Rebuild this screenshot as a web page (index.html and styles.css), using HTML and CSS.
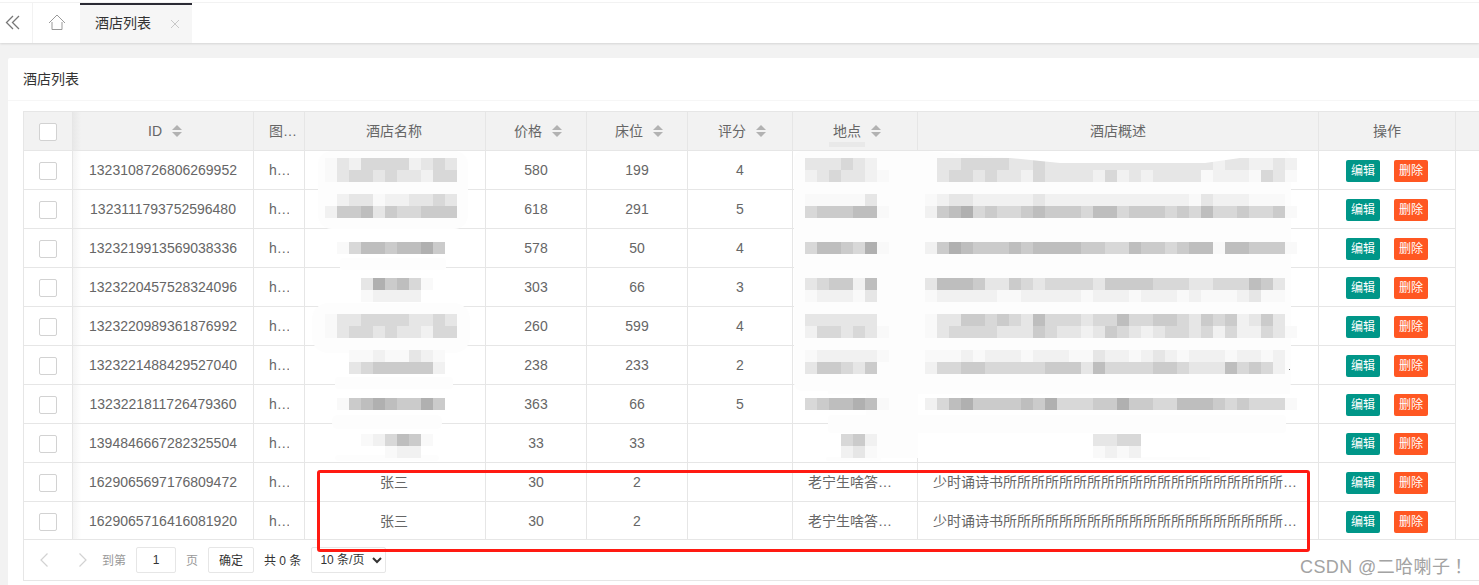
FILE: index.html
```html
<!DOCTYPE html>
<html lang="zh">
<head>
<meta charset="utf-8">
<title>酒店列表</title>
<link rel="stylesheet" href="styles.css">
</head>
<body>
<header class="topbar">
  <div class="tabs">
    <button class="tab-tool collapse" aria-label="收起">
      <svg width="20" height="20" viewBox="0 0 20 20"><path class="ico-dark" d="M8 3 1.5 9.5 8 16M14 3 7.5 9.5 14 16"/></svg>
    </button>
    <button class="tab-tool home" aria-label="首页">
      <svg width="18" height="18" viewBox="0 0 18 18"><path class="ico-light" d="M1 9 9 1l8 8M4 8v7.5h10V8"/></svg>
    </button>
    <div class="tab">
      <span>酒店列表</span>
      <svg class="tab-close" width="10" height="10" viewBox="0 0 10 10"><path d="M1 1l8 8M9 1 1 9"/></svg>
    </div>
  </div>
</header>

<main class="page">
  <section class="card">
    <h2 class="card-title">酒店列表</h2>
    <div class="card-body">
      <div class="grid-wrap">
        <table class="grid">
          <colgroup>
            <col class="c-check"><col class="c-id"><col class="c-img"><col class="c-name"><col class="c-num"><col class="c-num"><col class="c-score"><col class="c-loc"><col class="c-desc"><col class="c-act"><col class="c-gutter">
          </colgroup>
          <thead>
            <tr>
              <th><span class="check"></span></th>
              <th class="shade sortable">ID<i class="sort"></i></th>
              <th class="img-head"><div class="clip">图片</div></th>
              <th class="name-cell">酒店名称</th>
              <th class="sortable">价格<i class="sort"></i></th>
              <th class="sortable">床位<i class="sort"></i></th>
              <th class="sortable">评分<i class="sort"></i></th>
              <th class="sortable">地点<i class="sort"></i></th>
              <th>酒店概述</th>
              <th>操作</th>
              <th class="gutter"></th>
            </tr>
          </thead>
          <tbody>
            <tr><td><span class="check"></span></td><td class="shade">1323108726806269952</td><td><div class="clip">http</div></td><td></td><td>580</td><td>199</td><td>4</td><td></td><td></td><td><a class="btn edit">编辑</a><a class="btn del">删除</a></td><td class="gutter"></td></tr>
            <tr><td><span class="check"></span></td><td class="shade">1323111793752596480</td><td><div class="clip">http</div></td><td></td><td>618</td><td>291</td><td>5</td><td></td><td></td><td><a class="btn edit">编辑</a><a class="btn del">删除</a></td><td class="gutter"></td></tr>
            <tr><td><span class="check"></span></td><td class="shade">1323219913569038336</td><td><div class="clip">http</div></td><td></td><td>578</td><td>50</td><td>4</td><td></td><td></td><td><a class="btn edit">编辑</a><a class="btn del">删除</a></td><td class="gutter"></td></tr>
            <tr><td><span class="check"></span></td><td class="shade">1323220457528324096</td><td><div class="clip">http</div></td><td></td><td>303</td><td>66</td><td>3</td><td></td><td></td><td><a class="btn edit">编辑</a><a class="btn del">删除</a></td><td class="gutter"></td></tr>
            <tr><td><span class="check"></span></td><td class="shade">1323220989361876992</td><td><div class="clip">http</div></td><td></td><td>260</td><td>599</td><td>4</td><td></td><td></td><td><a class="btn edit">编辑</a><a class="btn del">删除</a></td><td class="gutter"></td></tr>
            <tr><td><span class="check"></span></td><td class="shade">1323221488429527040</td><td><div class="clip">http</div></td><td></td><td>238</td><td>233</td><td>2</td><td></td><td></td><td><a class="btn edit">编辑</a><a class="btn del">删除</a></td><td class="gutter"></td></tr>
            <tr><td><span class="check"></span></td><td class="shade">1323221811726479360</td><td><div class="clip">http</div></td><td></td><td>363</td><td>66</td><td>5</td><td></td><td></td><td><a class="btn edit">编辑</a><a class="btn del">删除</a></td><td class="gutter"></td></tr>
            <tr><td><span class="check"></span></td><td class="shade">1394846667282325504</td><td><div class="clip">http</div></td><td></td><td>33</td><td>33</td><td></td><td></td><td></td><td><a class="btn edit">编辑</a><a class="btn del">删除</a></td><td class="gutter"></td></tr>
            <tr><td><span class="check"></span></td><td class="shade">1629065697176809472</td><td><div class="clip">http</div></td><td class="name-cell">张三</td><td>30</td><td>2</td><td></td><td><div class="clip">老宁生啥答案哦</div></td><td><div class="clip">少时诵诗书所所所所所所所所所所所所所所所所所所所所所所所</div></td><td><a class="btn edit">编辑</a><a class="btn del">删除</a></td><td class="gutter"></td></tr>
            <tr class="last"><td><span class="check"></span></td><td class="shade">1629065716416081920</td><td><div class="clip">http</div></td><td class="name-cell">张三</td><td>30</td><td>2</td><td></td><td><div class="clip">老宁生啥答案哦</div></td><td><div class="clip">少时诵诗书所所所所所所所所所所所所所所所所所所所所所所所</div></td><td><a class="btn edit">编辑</a><a class="btn del">删除</a></td><td class="gutter"></td></tr>
          </tbody>
        </table>
        <div class="pager">
          <svg class="pg-arrow" width="8" height="14" viewBox="0 0 8 14"><path d="M7.5.5 1 7l6.5 6.5"/></svg>
          <svg class="pg-arrow next" width="8" height="14" viewBox="0 0 8 14"><path d="M.5.5 7 7 .5 13.5"/></svg>
          <span class="pg-muted goto">到第</span>
          <input class="pg-input" type="text" value="1" aria-label="页码">
          <span class="pg-muted">页</span>
          <button class="pg-ok">确定</button>
          <span class="pg-count">共 0 条</span>
          <select class="pg-size" aria-label="每页条数"><option>10 条/页</option></select>
        </div>
      </div>
    </div>
  </section>
</main>

<svg id="mosaic" class="mosaic" width="1479" height="585" viewBox="0 0 1479 585" aria-hidden="true"></svg>
<div class="redbox"></div>
<div class="watermark">CSDN @二哈喇子&#8201;！</div>
<script src="script.js"></script>
</body>
</html>
```
FILE: styles.css
```css
* { box-sizing: border-box; }
html, body { margin: 0; height: 585px; overflow: hidden; }
body {
  position: relative;
  background: #f2f2f2;
  color: #666;
  font: 14px/1.4 "Liberation Sans", "Noto Sans CJK SC", sans-serif;
}

/* top tab bar */
.topbar {
  height: 43px;
  padding-top: 2px;
  background: #fff;
  box-shadow: 0 1px 2px rgba(0, 0, 0, .12);
}
.tabs {
  display: flex;
  height: 41px;
  border-top: 1px solid #f2f2f2;
}
.tab-tool {
  display: flex;
  align-items: center;
  justify-content: center;
  padding: 0;
  border: 0;
  background: #fff;
}
.collapse {
  justify-content: flex-start;
  width: 33px;
  padding-left: 5px;
  border-right: 1px solid #f2f2f2;
}
.home { width: 47px; }
.ico-dark { fill: none; stroke: #777; stroke-width: 1.3; }
.ico-light { fill: none; stroke: #999; stroke-width: 1; }
.tab {
  display: flex;
  align-items: center;
  width: 112px;
  padding-left: 15px;
  background: #f6f6f6;
  border-top: 2px solid #2b2b34;
  color: #333;
}
.tab-close { margin-left: 19px; }
.tab-close path { fill: none; stroke: #c8c8c8; stroke-width: 1; }

/* card */
.page { padding: 15px 0 0 8px; }
.card {
  width: 1500px;
  background: #fff;
  border-radius: 2px;
}
.card-title {
  height: 43px;
  margin: 0;
  padding: 0 15px;
  border-bottom: 1px solid #f6f6f6;
  color: #333;
  font-size: 14px;
  font-weight: 400;
  line-height: 42px;
}
.card-body { padding: 10px 15px; }
.grid-wrap { border: 1px solid #e6e6e6; }

/* table */
.grid {
  width: 1532px;
  table-layout: fixed;
  border-collapse: separate;
  border-spacing: 0;
}
.c-check { width: 49px; }
.c-id, .c-name { width: 181px; }
.c-img { width: 51px; }
.c-num { width: 101px; }
.c-score { width: 105px; }
.c-loc { width: 125px; }
.c-desc { width: 401px; }
.c-act { width: 137px; }
.c-gutter { width: 100px; }
.grid th, .grid td {
  height: 39px;
  padding: 2px 15px 0;
  border-right: 1px solid #e6e6e6;
  border-bottom: 1px solid #e6e6e6;
  text-align: center;
  vertical-align: middle;
  font-weight: 400;
  white-space: nowrap;
}
.grid th { background: #f2f2f2; }
.grid th.sortable { padding-left: 19px; }
.grid th.img-head { padding-right: 8px; }
.grid .name-cell { padding-right: 17px; }
.grid .last td { height: 38px; }
.grid td.gutter { border: 0; }
.grid .last td.gutter { border-bottom: 1px solid #e6e6e6; }
.grid th.gutter { border-right: 0; }
.grid td.shade {
  background: linear-gradient(90deg, #f4f4f4, #fff 8px);
}
.grid th.shade {
  background: linear-gradient(90deg, #e8e8e8, #f2f2f2 8px);
}
.clip {
  overflow: hidden;
  text-overflow: ellipsis;
  text-align: left;
}
.check {
  display: block;
  width: 18px;
  height: 18px;
  margin: 0 auto;
  background: #fff;
  border: 1px solid #d2d2d2;
  border-radius: 2px;
}
.grid th:first-child, .grid td:first-child { padding: 2px 0 0; }
.sort {
  display: inline-block;
  position: relative;
  width: 10px;
  height: 13px;
  margin-left: 10px;
  vertical-align: -2px;
}
.sort::before, .sort::after {
  content: "";
  position: absolute;
  left: 0;
  border: 5px solid transparent;
}
.sort::before { top: -5px; border-bottom-color: #b2b2b2; }
.sort::after { top: 7px; border-top-color: #b2b2b2; }

.btn {
  display: inline-block;
  width: 34px;
  height: 22px;
  border-radius: 2px;
  color: #fff;
  font-size: 12px;
  line-height: 22px;
  text-align: center;
  vertical-align: middle;
}
.edit { background: #009688; }
.del { margin-left: 14px; background: #ff5722; }

/* pager */
.pager {
  display: flex;
  align-items: center;
  height: 40px;
  padding-left: 16px;
  font-size: 12px;
}
.pg-arrow path { fill: none; stroke: #d2d2d2; stroke-width: 1.2; }
.next { margin-left: 31px; }
.pg-muted { margin-left: 10px; padding-top: 2px; color: #999; }
.goto { margin-left: 15px; }
.pg-input {
  width: 40px;
  height: 26px;
  margin-left: 10px;
  padding: 0;
  border: 1px solid #e6e6e6;
  border-radius: 2px;
  color: #333;
  font: inherit;
  text-align: center;
}
.pg-ok {
  width: 46px;
  height: 26px;
  margin-left: 10px;
  padding: 2px 0 0;
  border: 1px solid #e6e6e6;
  border-radius: 2px;
  background: #fff;
  color: #333;
  font: inherit;
}
.pg-count { margin-left: 10px; padding-top: 2px; color: #333; }
.pg-size {
  width: 75px;
  height: 26px;
  margin-left: 10px;
  padding: 0 0 0 4px;
  border: 1px solid #e6e6e6;
  border-radius: 2px;
  background: #fff;
  color: #333;
  font: inherit;
}

/* overlays lying over the screenshot */
.mosaic {
  position: absolute;
  top: 0;
  left: 0;
  pointer-events: none;
}
.redbox {
  position: absolute;
  top: 470px;
  left: 317px;
  width: 993px;
  height: 82px;
  border: 3px solid #ff1a12;
  border-radius: 3px;
  pointer-events: none;
}
.watermark {
  position: absolute;
  top: 554px;
  left: 1300px;
  color: #a3a3a3;
  font-family: "Liberation Sans", "Noto Sans CJK TC", sans-serif;
  font-size: 18px;
  letter-spacing: .4px;
  line-height: 26px;
  white-space: nowrap;
}
```
FILE: script.js
```js
// Draws the pixelated masking that hides parts of the table.
var shades = { a: '#b0b0b0', b: '#bebebe', c: '#cbcbcb', d: '#d8d8d8', e: '#e6e6e6', f: '#f1f1f1', g: '#f9f9f9' };
var NS = 'http://www.w3.org/2000/svg';
var svg = document.getElementById('mosaic');

function rect(x, y, w, h, fill, r) {
  var el = document.createElementNS(NS, 'rect');
  el.setAttribute('x', x);
  el.setAttribute('y', y);
  el.setAttribute('width', w);
  el.setAttribute('height', h);
  el.setAttribute('fill', fill);
  if (r) el.setAttribute('rx', r);
  svg.appendChild(el);
}

// soft, nearly white smears that cover the grid lines
[
  [318, 151, 150, 78, 14], [340, 258, 106, 12, 3], [312, 303, 158, 50, 16],
  [335, 377, 118, 12, 3], [332, 415, 110, 14, 6], [335, 455, 104, 6, 3],
  [794, 151, 497, 240, 8], [828, 384, 462, 10, 0], [828, 415, 458, 18, 3],
  [866, 384, 52, 74, 0], [826, 457, 55, 4, 2], [1100, 457, 110, 3, 1]
].forEach(function (p) { rect(p[0], p[1], p[2], p[3], '#fdfdfd', p[4]); });

var NAME = 325, LOC = 805, DESC = 925;
var rows = [
  [NAME, 158, 'gefddddfede'], [NAME, 170, 'geddedeefdd'],
  [NAME, 194, '.feegffeede'], [NAME, 206, 'fccbecddccc'],
  [NAME, 242, '.gdbbcbbac'],
  [NAME, 278, '...eacbdg'], [NAME, 290, '...gffff'],
  [NAME, 314, 'geeddddeede'], [NAME, 326, 'geddedeefdd'],
  [NAME, 350, '..ggfggefg'], [NAME, 362, '..edcccccf'],
  [NAME, 398, '.gcbabccac'],
  [NAME, 434, '...gfdbcg'], [NAME, 446, '.....gff'],

  [LOC, 158, 'eeedef'], [LOC, 170, 'fedeefg'],
  [LOC, 194, 'ggggge'], [LOC, 206, 'dcccbbg'],
  [LOC, 242, 'dbbcdag'],
  [LOC, 278, 'edccfb'], [LOC, 290, 'gfffge'],
  [LOC, 314, 'eeeeee'], [LOC, 326, 'fddedeg'],
  [LOC, 350, 'gfffffg'], [LOC, 362, 'eccdec'],
  [LOC, 398, 'dcbbabg'],
  [LOC, 434, '...dcf'], [LOC, 446, '...feg'],

  [DESC, 158, '.eeddddeedeeeeeeeeeeeeeefeeffef'],
  [DESC, 170, '.eddedeefdeeeefdfefeeeegfffgdeg'],
  [DESC, 194, 'gfeefffffeffffffffffffgefffggg'],
  [DESC, 206, 'fcbadcddcbcccdbbdcccdcdbddcddcg'],
  [DESC, 242, 'fcabcccbcbbbbccddbccdcbbgbbcccg'],
  [DESC, 278, 'ebbbceecdeddddeccccdddeedddbce'],
  [DESC, 290, 'gfffffggfffffgfffgfffgfgggfegg'],
  [DESC, 314, 'geeccdcdebdddeddbddccdecdcfece'],
  [DESC, 326, 'geddddeeecdeefecdefeddedfdffdeg'],
  [DESC, 350, 'gggfgfffgfffggeffgfefgfffgffgf'],
  [DESC, 362, 'fddccdddddcccebddddccdeeebdcdf'],
  [DESC, 398, 'fdbaccccbcadddccaccddbbbcdcdddg'],
  [DESC, 434, '..............eedd'],
  [DESC, 446, '..............gfgf']
];
rows.forEach(function (row) {
  row[2].split('').forEach(function (ch, i) {
    if (shades[ch]) rect(row[0] + i * 12, row[1], 12, 12, shades[ch]);
  });
});

// white smear that bites into the first masked line
var bite = document.createElementNS(NS, 'path');
bite.setAttribute('d', 'M925 151H1240V158L1205 163H1060L1000 157Z');
bite.setAttribute('fill', '#fff');
svg.appendChild(bite);

// stray pixels left in the header and by the sixth row
rect(829, 142, 36, 5, '#e9e9e9');
rect(1289, 369, 1, 1, '#666');
```
